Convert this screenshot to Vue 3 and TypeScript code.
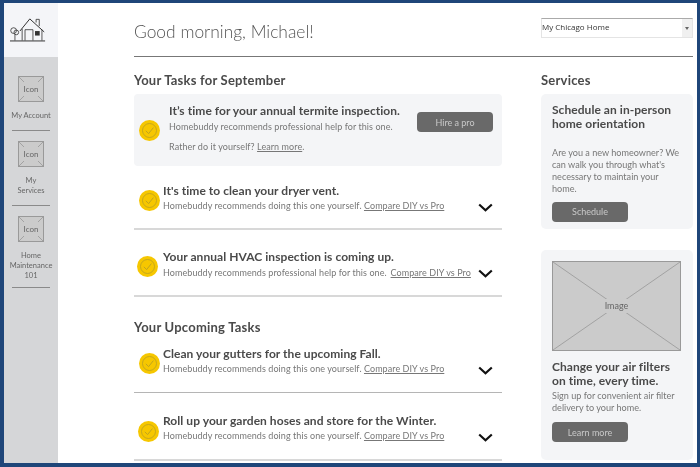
<script setup lang="ts">
type Task = { title: string; note: string; variant: string };

const navItems = [
  { label: ["My Account"], variant: "" },
  { label: ["My", "Services"], variant: "" },
  { label: ["Home", "Maintenance", "101"], variant: "nav-last" },
];

const diy = "Homebuddy recommends doing this one yourself.";
const pro = "Homebuddy recommends professional help for this one.";

const currentTasks: Task[] = [
  { title: "It's time to clean your dryer vent.", note: diy, variant: "dryer" },
  { title: "Your annual HVAC inspection is coming up.", note: pro, variant: "hvac" },
];

const upcomingTasks: Task[] = [
  { title: "Clean your gutters for the upcoming Fall.", note: diy, variant: "gutters" },
  { title: "Roll up your garden hoses and store for the Winter.", note: diy, variant: "hoses" },
];
</script>

<template>
  <div class="frame">
    <aside class="sidebar">
      <div class="logo">
        <svg width="36" height="27" viewBox="0 0 40 30" fill="none" stroke="#333" stroke-width="0.9">
          <path d="M0 25.5H39" stroke-width="1.1" />
          <circle cx="4" cy="14" r="3.2" />
          <circle cx="7" cy="16" r="2.6" />
          <path d="M5.5 18V25" />
          <path d="M11 14.5L22 1L38 15.5" stroke-width="1.1" />
          <path d="M13.5 12V25M35.5 13V25" />
          <path d="M29 5V1.5H32.5V9" />
          <path d="M16.7 25V13H25.5V25" />
          <rect x="27.8" y="14.5" width="5.2" height="5" fill="#333" stroke="none" />
        </svg>
      </div>
      <nav class="nav">
        <div v-for="item in navItems" :key="item.label[0]" class="nav-item" :class="item.variant">
          <div class="placeholder icon-box">
            <svg viewBox="0 0 100 100" preserveAspectRatio="none">
              <path d="M0 0L100 100M100 0L0 100" />
            </svg>
            <span>Icon</span>
          </div>
          <div class="nav-label">
            <div v-for="line in item.label" :key="line">{{ line }}</div>
          </div>
        </div>
      </nav>
    </aside>

    <div class="page">
      <header class="top">
        <h1>Good morning, Michael!</h1>
        <div class="home-select">
          <span>My Chicago Home</span>
          <i></i>
        </div>
      </header>

      <div class="columns">
        <main class="tasks">
          <h2>Your Tasks for September</h2>
          <section class="featured">
            <svg class="check" viewBox="0 0 21 21">
              <circle cx="10.5" cy="10.5" r="10.5" fill="#f6c700" />
              <circle cx="10.5" cy="10.5" r="7" fill="none" stroke="#b9a023" stroke-width="0.8" />
              <path d="M6.8 10.8L9.6 13.6L14.4 7.6" fill="none" stroke="#b9a023" stroke-width="0.9" />
            </svg>
            <div class="featured-text">
              <h3>It’s time for your annual termite inspection.</h3>
              <p>Homebuddy recommends professional help for this one.</p>
              <p class="rather">Rather do it yourself? <a>Learn more</a>.</p>
            </div>
            <button class="btn">Hire a pro</button>
          </section>

          <article v-for="task in currentTasks" :key="task.title" class="task" :class="task.variant">
            <svg class="check" viewBox="0 0 21 21">
              <circle cx="10.5" cy="10.5" r="10.5" fill="#f6c700" />
              <circle cx="10.5" cy="10.5" r="7" fill="none" stroke="#b9a023" stroke-width="0.8" />
              <path d="M6.8 10.8L9.6 13.6L14.4 7.6" fill="none" stroke="#b9a023" stroke-width="0.9" />
            </svg>
            <div class="task-text">
              <h3>{{ task.title }}</h3>
              <p>{{ task.note }} <a>Compare DIY vs Pro</a></p>
            </div>
            <svg class="chevron" viewBox="0 0 15 9">
              <path d="M1.2 1.5L7.5 7.2L13.8 1.5" fill="none" stroke="#111" stroke-width="2.2" />
            </svg>
          </article>

          <h2 class="upcoming">Your Upcoming Tasks</h2>
          <article v-for="task in upcomingTasks" :key="task.title" class="task" :class="task.variant">
            <svg class="check" viewBox="0 0 21 21">
              <circle cx="10.5" cy="10.5" r="10.5" fill="#f6c700" />
              <circle cx="10.5" cy="10.5" r="7" fill="none" stroke="#b9a023" stroke-width="0.8" />
              <path d="M6.8 10.8L9.6 13.6L14.4 7.6" fill="none" stroke="#b9a023" stroke-width="0.9" />
            </svg>
            <div class="task-text">
              <h3>{{ task.title }}</h3>
              <p>{{ task.note }} <a>Compare DIY vs Pro</a></p>
            </div>
            <svg class="chevron" viewBox="0 0 15 9">
              <path d="M1.2 1.5L7.5 7.2L13.8 1.5" fill="none" stroke="#111" stroke-width="2.2" />
            </svg>
          </article>
        </main>

        <aside class="services">
          <h2>Services</h2>
          <section class="card orientation">
            <h3>Schedule an in-person home orientation</h3>
            <p>Are you a new homeowner? We can walk you through what's necessary to maintain your home.</p>
            <button class="btn">Schedule</button>
          </section>
          <section class="card filters">
            <div class="placeholder image-box">
              <svg viewBox="0 0 100 100" preserveAspectRatio="none">
                <path d="M0 0L100 100M100 0L0 100" />
              </svg>
              <span>Image</span>
            </div>
            <h3>Change your air filters on time, every time.</h3>
            <p>Sign up for convenient air filter delivery to your home.</p>
            <button class="btn">Learn more</button>
          </section>
        </aside>
      </div>
    </div>
  </div>
</template>

<style>
html, body {
  margin: 0;
  background: #fff;
}
</style>

<style scoped>
.frame {
  width: 700px;
  height: 467px;
  box-sizing: border-box;
  border-style: solid;
  border-color: #1f4679;
  border-width: 3px 3px 4px 4px;
  display: flex;
  overflow: hidden;
  background: #fff;
  font-family: Lato, "Open Sans", sans-serif;
  color: #444;
  filter: blur(0.35px);
}

/* sidebar */
.sidebar {
  width: 54px;
  flex: none;
  display: flex;
  flex-direction: column;
  background: #d5d6d8;
}
.logo {
  height: 54px;
  background: #f4f5f8;
  display: flex;
  align-items: flex-end;
  padding: 0 0 12px 6px;
  box-sizing: border-box;
}
.nav {
  display: flex;
  flex-direction: column;
  align-items: center;
  padding-top: 19px;
}
.nav-item {
  width: 38px;
  display: flex;
  flex-direction: column;
  align-items: center;
  border-bottom: 1px solid #8a8a8a;
  padding-bottom: 9px;
  margin-bottom: 10px;
}
.nav-last {
  padding-bottom: 6px;
}
.nav-label {
  margin-top: 9px;
  font-size: 7.5px;
  line-height: 10px;
  color: #666;
  text-align: center;
  white-space: nowrap;
}
.placeholder {
  position: relative;
  display: flex;
  align-items: center;
  justify-content: center;
  box-sizing: border-box;
  background: #cbcbcb;
  border: 1px solid #999;
  color: #666;
}
.placeholder svg {
  position: absolute;
  inset: 0;
  width: 100%;
  height: 100%;
}
.placeholder path {
  stroke: #a2a2a2;
  stroke-width: 1;
  vector-effect: non-scaling-stroke;
}
.placeholder span {
  position: relative;
  background: #cbcbcb;
  padding: 2px 3px;
  line-height: 10px;
  font-size: 8px;
}
.icon-box {
  width: 26px;
  height: 26px;
}

/* header */
.page {
  flex: 1;
  min-width: 0;
  padding: 0 4px 0 76px;
  display: flex;
  flex-direction: column;
}
.top {
  height: 54px;
  flex: none;
  box-sizing: border-box;
  border-bottom: 1px solid #777;
  display: flex;
  justify-content: space-between;
  padding-top: 15px;
}
h1 {
  margin: 3px 0 0;
  font-size: 17.4px;
  line-height: 22px;
  font-weight: 300;
  color: #555;
}
.home-select {
  width: 152px;
  height: 20px;
  box-sizing: border-box;
  border: 1px solid #e4e4e4;
  border-top: 1px solid #aaa;
  display: flex;
  justify-content: space-between;
  font-family: "Open Sans", sans-serif;
  font-size: 8px;
  line-height: 15px;
  color: #333;
}
.home-select i {
  width: 10px;
  height: 18px;
  background: #f0f0f0;
  position: relative;
}
.home-select i::after {
  content: "";
  position: absolute;
  left: 3px;
  top: 8px;
  border: 2px solid transparent;
  border-top: 3px solid #666;
  border-bottom: 0;
}

/* columns */
.columns {
  display: flex;
  gap: 39px;
  flex: 1;
  min-height: 0;
}
.tasks {
  width: 368px;
  flex: none;
}
.services {
  width: 152px;
  flex: none;
}
h2 {
  margin: 0;
  padding-top: 14px;
  height: 37px;
  box-sizing: border-box;
  font-size: 13px;
  line-height: 18px;
  font-weight: 700;
  color: #4a4a4a;
  letter-spacing: 0.22px;
}
h3 {
  margin: 0;
  font-size: 12px;
  line-height: 15px;
  font-weight: 700;
  color: #4a4a4a;
  letter-spacing: 0.05px;
}
p {
  margin: 0;
  font-size: 9px;
  line-height: 12px;
  color: #777;
  letter-spacing: 0.07px;
}
a {
  text-decoration: underline;
}
.btn {
  width: 76px;
  height: 20px;
  padding: 0;
  border: 0;
  border-radius: 4px;
  background: #696969;
  color: #c9c9c9;
  font-family: inherit;
  font-size: 9px;
}

/* tasks */
.check {
  width: 21px;
  height: 21px;
  flex: none;
}
.featured {
  height: 72px;
  background: #f4f5f7;
  border-radius: 4px;
  display: flex;
  align-items: flex-start;
  padding: 9px 9px 0 5px;
  box-sizing: border-box;
}
.featured .check {
  margin-top: 17px;
}
.featured-text {
  margin-left: 9px;
  flex: 1;
}
.featured-text p {
  margin-top: 3px;
}
.featured-text .rather {
  margin-top: 8px;
}
.featured .btn {
  margin-top: 9px;
}
.task {
  display: flex;
  align-items: flex-start;
  box-sizing: border-box;
  border-bottom: 2px solid #d8d8d8;
  padding-left: 5px;
}
.task .check {
  margin-top: 7px;
}
.task-text {
  margin-left: 3px;
  flex: 1;
  white-space: nowrap;
}
.task-text p {
  margin-top: 2px;
}
.chevron {
  width: 15px;
  height: 9px;
  flex: none;
  margin: 20px 9px 0 0;
}
.dryer {
  height: 64px;
  padding-top: 17px;
}
.hvac {
  height: 67px;
  padding-top: 19px;
  padding-left: 3px;
}
.hvac .task-text {
  margin-left: 5px;
}
.hvac .task-text p {
  margin-top: 3px;
}
.hvac a {
  margin-left: 1.5px;
}
.gutters {
  height: 50px;
  padding-top: 3px;
  border-bottom: 1px solid #b5b5b5;
}
.hoses {
  height: 68px;
  padding-top: 20px;
  padding-left: 4px;
}
.hoses .check {
  margin-top: 8px;
}
.hoses .task-text {
  margin-left: 4px;
}
.upcoming {
  padding-top: 21px;
  height: 46px;
}

/* services */
.card {
  background: #f4f5f7;
  border-radius: 5px;
  padding: 0 9px 0 11px;
  box-sizing: border-box;
}
.orientation {
  height: 135px;
  padding-top: 9px;
}
.orientation h3 {
  line-height: 13.5px;
}
.orientation p {
  margin-top: 17px;
  margin-bottom: 4px;
  font-size: 9.1px;
  line-height: 12px;
  letter-spacing: 0;
}
.filters {
  height: 210px;
  margin-top: 21px;
  padding-top: 11px;
}
.image-box {
  width: 129px;
  height: 90px;
}
.image-box span {
  font-size: 9px;
}
.filters h3 {
  margin-top: 9px;
  line-height: 14px;
}
.filters p {
  margin-top: 2px;
  font-size: 9.1px;
  line-height: 11.5px;
  letter-spacing: 0;
}
.filters .btn {
  margin-top: 9px;
}
</style>
